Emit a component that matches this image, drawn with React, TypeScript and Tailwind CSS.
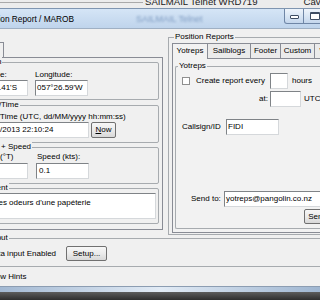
import React from "react";

const sunk =
  "bg-white border border-t-[#7f8387] border-l-[#7f8387] border-r-[#d5d8db] border-b-[#d5d8db] whitespace-nowrap overflow-hidden";
const grp = "relative border border-[#a7abaf] rounded-[2px]";
const btn =
  "flex items-center justify-center border border-[#707070] rounded-[2px] bg-gradient-to-b from-[#f7f7f7] via-[#ebebeb] to-[#d8d8d8] whitespace-nowrap";

function Legend({ children, className }: { children: React.ReactNode; className: string }) {
  return (
    <span className={`absolute -top-[6px] bg-[#f0f0f0] px-px leading-[10px] whitespace-nowrap ${className}`}>
      {children}
    </span>
  );
}

export default function App() {
  return (
    <div className="relative w-[320px] h-[300px] overflow-hidden bg-[#f0f0f0] text-black text-[8px] leading-[10px] font-['Liberation_Sans',Arial,sans-serif]">
      {/* window behind */}
      <div className="h-[8px] flex bg-[#ececec] overflow-hidden">
        <div className="w-[143px] shrink-0">
          <div className="mt-[2px] h-px bg-[#a9a9a9]" />
        </div>
        <div className="ml-[2px] -mt-[4px] text-[9.6px] leading-[12px] whitespace-nowrap text-[#222]">SAILMAIL Telnet WRD719</div>
        <div className="ml-auto -mt-[4px] text-[9.6px] leading-[12px] text-[#222] -mr-[6px]">Cave</div>
      </div>

      {/* title bar */}
      <div className="h-[21px] flex items-center border-t border-b border-t-[#7f95b0] border-b-[#9fb0c4] bg-gradient-to-b from-[#d5e5f6] to-[#bfd4ec]">
        <span className="-ml-[20px] text-[8.3px] whitespace-nowrap">Position Report / MAROB</span>
        <span className="ml-[62px] text-[9px] text-[#7f9cc2] blur-[1.3px] whitespace-nowrap">SAILMAIL Telnet</span>
        <div className="ml-auto -mr-[4px] self-start flex h-[15px]">
          <div className="w-[20px] h-[15px] border border-t-0 border-[#6f86a6] rounded-bl-[3px] bg-gradient-to-b from-[#eef4fb] via-[#d9e6f4] to-[#c4d6ec] flex justify-center">
            <div className="mt-[6px] w-[9px] h-[4px] bg-white border border-[#3e4d63] rounded-[1px]" />
          </div>
          <div className="w-[20px] h-[15px] border border-t-0 border-l-0 border-[#6f86a6] bg-gradient-to-b from-[#eef4fb] via-[#d9e6f4] to-[#c4d6ec] pl-[6px]">
            <div className="mt-[3px] w-[10px] h-[8px] bg-white border border-t-2 border-[#3e4d63] rounded-[1px]" />
          </div>
        </div>
      </div>

      {/* client */}
      <div className="flex h-[206px]">
        {/* left tab control */}
        <div className="w-[163px] shrink-0 pt-[13px]">
          <div className="h-[15px] w-[4px] border-t border-r border-[#898c95]" />
          <div className="-ml-[40px] w-[203px] h-[173px] border-t border-r border-b border-[#898c95] pt-[4px] pl-[8px] pr-[3px] flex flex-col">
            <div className={`${grp} h-[38px] pt-[7px] pl-[7px] flex gap-[7px]`}>
              <Legend className="left-[3px]">Position</Legend>
              <div className="w-[52px] shrink-0 flex flex-col">
                <div className="h-[10px] whitespace-nowrap">Latitude:</div>
                <div className={`${sunk} h-[16px] pl-px leading-[14px]`}>25°08.41'S</div>
              </div>
              <div className="w-[53px] shrink-0 flex flex-col">
                <div className="h-[10px] whitespace-nowrap">Longitude:</div>
                <div className={`${sunk} h-[16px] pl-px leading-[14px]`}>057°26.59'W</div>
              </div>
            </div>

            <div className={`${grp} mt-[5px] h-[38px] pt-[6px] pl-[7px] flex flex-col`}>
              <Legend className="left-[12px]">Date/Time</Legend>
              <div className="h-[10px] ml-[5px] whitespace-nowrap">Date/Time (UTC, dd/MM/yyyy hh:mm:ss)</div>
              <div className="flex">
                <div className={`${sunk} ml-[2px] w-[111px] h-[16px] pl-px leading-[14px]`}>21/10/2013 22:10:24</div>
                <div className={`${btn} ml-[2px] w-[25px] h-[16px]`}>
                  <span className="underline underline-offset-1">N</span>ow
                </div>
              </div>
            </div>

            <div className={`${grp} mt-[4px] h-[37px] pt-[4px] pl-[7px] flex gap-[8px]`}>
              <Legend className="left-[3px]">Course + Speed</Legend>
              <div className="w-[52px] shrink-0 flex flex-col">
                <div className="h-[11px] -ml-[4px] whitespace-nowrap">Course (°T)</div>
                <div className={`${sunk} h-[16px] pl-px leading-[14px]`}>231</div>
              </div>
              <div className="w-[53px] shrink-0 flex flex-col">
                <div className="h-[11px] ml-px whitespace-nowrap">Speed (kts):</div>
                <div className={`${sunk} h-[16px] pl-[2px] leading-[14px]`}>0.1</div>
              </div>
            </div>

            <div className={`${grp} mt-[4px] h-[36px] pt-[4px] pl-[7px] pr-[2px] flex`}>
              <Legend className="left-[3px]">Comment</Legend>
              <div className={`${sunk} ml-[15px] flex-1 h-[26px] pl-[2px] pt-[4px]`}>Les odeurs d'une papéterie</div>
            </div>
          </div>
        </div>

        {/* right group */}
        <div className="relative ml-[5px] mt-[8px] w-[200px] h-[198px] shrink-0 border-l border-t border-b border-[#a7abaf] pt-[5px] pl-[3px]">
          <Legend className="left-[5px]">Position Reports</Legend>
          <div className="flex h-[15px]">
            <div className="relative z-10 w-[36px] h-[16px] border-l border-t border-r border-[#898c95] bg-[#f2f2f2] flex items-center justify-center pb-px">Yotreps</div>
            <div className="w-[43px] h-[15px] border-t border-r border-[#898c95] bg-[#ebebeb] flex items-center justify-center">Sailblogs</div>
            <div className="w-[30px] h-[15px] border-t border-r border-[#898c95] bg-[#ebebeb] flex items-center justify-center">Footer</div>
            <div className="w-[34px] h-[15px] border-t border-r border-[#898c95] bg-[#ebebeb] flex items-center justify-center">Custom</div>
            <div className="w-[40px] h-[15px] border-t border-r border-[#898c95] bg-[#ebebeb] flex items-center justify-center">Weather</div>
          </div>
          <div className="h-[175px] border-t border-l border-b border-[#898c95] bg-[#f2f2f2] pt-[7px] pl-[2px]">
            <div className="relative h-[163px] border-l border-t border-b border-[#a7abaf] rounded-l-[2px] pt-[6px] pl-[6px]">
              <span className="absolute -top-[6px] left-[2px] bg-[#f2f2f2] px-px leading-[10px]">Yotreps</span>
              <div className="flex items-center h-[16px]">
                <div className="w-[8px] h-[8px] bg-white border border-[#8f8f8f] shrink-0" />
                <div className="ml-[6px] w-[74px] shrink-0 whitespace-nowrap">Create report every</div>
                <div className={`${sunk} w-[18px] h-[16px] shrink-0`} />
                <div className="ml-[4px]">hours</div>
              </div>
              <div className="mt-[2px] flex items-center h-[16px]">
                <div className="w-[86px] shrink-0 text-right">at:</div>
                <div className={`${sunk} ml-[2px] w-[31px] h-[16px] shrink-0`} />
                <div className="ml-[3px]">UTC</div>
              </div>
              <div className="mt-[12px] flex items-center h-[16px]">
                <div className="w-[44px] shrink-0 whitespace-nowrap">Callsign/ID</div>
                <div className={`${sunk} w-[53px] h-[16px] shrink-0 pl-px leading-[14px]`}>FIDI</div>
              </div>
              <div className="mt-[56px] flex items-center h-[16px]">
                <div className="ml-[9px] w-[33px] shrink-0 whitespace-nowrap">Send to:</div>
                <div className={`${sunk} w-[110px] h-[16px] shrink-0 pl-px leading-[14px]`}>yotreps@pangolin.co.nz</div>
              </div>
              <div className="mt-[2px] flex">
                <div className={`${btn} ml-[122px] w-[27px] h-[15px] shrink-0`}>Send</div>
              </div>
            </div>
          </div>
        </div>
      </div>

      {/* input group */}
      <div className={`${grp} mt-[3px] -ml-[30px] w-[400px] h-[29px] pt-[7px] pl-[17px] flex`}>
        <Legend className="left-[18px]">Input</Legend>
        <div className="h-[15px] flex items-center whitespace-nowrap">Data input Enabled</div>
        <div className={`${btn} ml-[10px] w-[41px] h-[15px]`}>Setup...</div>
      </div>

      <div className="h-[19px] flex items-center">
        <span className="-ml-[14px] whitespace-nowrap">Show Hints</span>
      </div>

      {/* window bottom frame */}
      <div className="h-px bg-[#8c9db2]" />
      <div className="h-[5px] bg-gradient-to-r from-[#a3b9d3] via-[#e2ebf5] to-[#9fb6d1]" />
      <div className="h-[8px] bg-gradient-to-b from-[#5d5d5d] to-[#2e2e2e]" />
    </div>
  );
}
